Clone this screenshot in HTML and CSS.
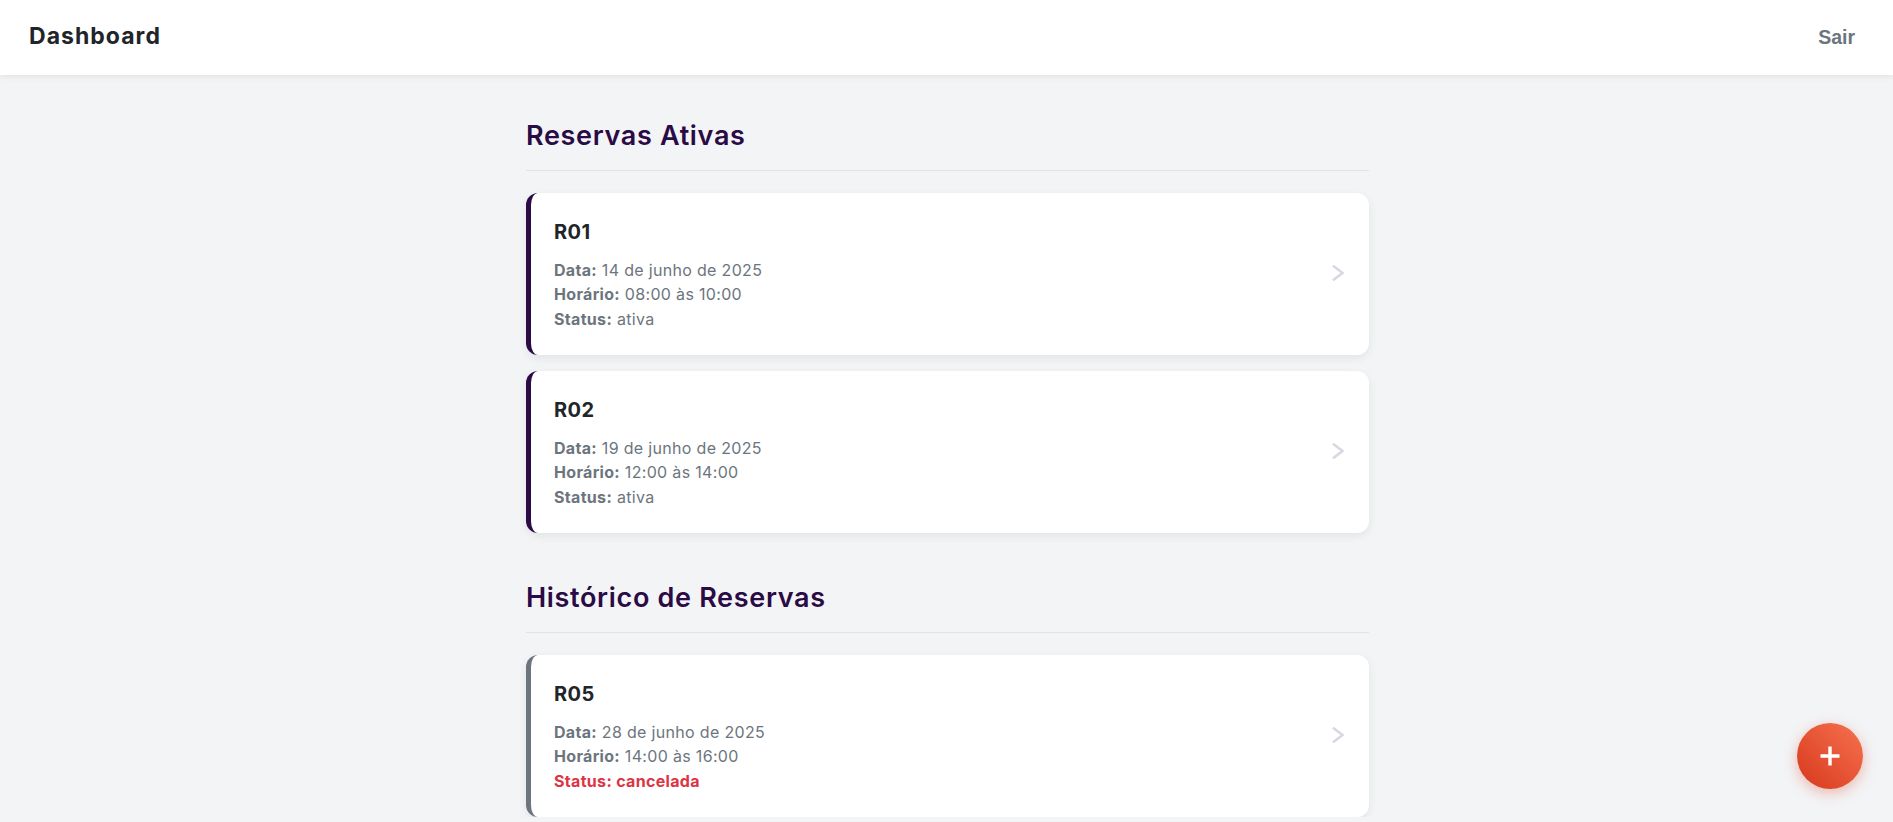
FILE: index.html
```html
<!DOCTYPE html>
<html lang="pt-BR">
<head>
<meta charset="utf-8">
<title>Dashboard</title>
<link rel="stylesheet" href="styles.css">
</head>
<body>
<header class="topbar">
  <h1 class="brand">Dashboard</h1>
  <button class="logout">Sair</button>
</header>
<main class="container">
  <section class="section">
    <h2 class="section-title">Reservas Ativas</h2>
    <div class="card-list">
      <div class="card card-active">
        <div class="card-body">
          <h3 class="card-title">R01</h3>
          <p class="card-line"><strong>Data:</strong> 14 de junho de 2025</p>
          <p class="card-line"><strong>Horário:</strong> 08:00 às 10:00</p>
          <p class="card-line"><strong>Status:</strong> ativa</p>
        </div>
        <svg class="chevron" viewBox="0 0 13 16" width="13" height="16"><polyline points="2,1.5 10.5,8 2,14.5" fill="none" stroke="#d6dae0" stroke-width="2.6" stroke-linecap="square"/></svg>
      </div>
      <div class="card card-active">
        <div class="card-body">
          <h3 class="card-title">R02</h3>
          <p class="card-line"><strong>Data:</strong> 19 de junho de 2025</p>
          <p class="card-line"><strong>Horário:</strong> 12:00 às 14:00</p>
          <p class="card-line"><strong>Status:</strong> ativa</p>
        </div>
        <svg class="chevron" viewBox="0 0 13 16" width="13" height="16"><polyline points="2,1.5 10.5,8 2,14.5" fill="none" stroke="#d6dae0" stroke-width="2.6" stroke-linecap="square"/></svg>
      </div>
    </div>
  </section>
  <section class="section section-history">
    <h2 class="section-title">Histórico de Reservas</h2>
    <div class="card-list">
      <div class="card card-past">
        <div class="card-body">
          <h3 class="card-title">R05</h3>
          <p class="card-line"><strong>Data:</strong> 28 de junho de 2025</p>
          <p class="card-line"><strong>Horário:</strong> 14:00 às 16:00</p>
          <p class="card-line status-cancel"><strong>Status: cancelada</strong></p>
        </div>
        <svg class="chevron" viewBox="0 0 13 16" width="13" height="16"><polyline points="2,1.5 10.5,8 2,14.5" fill="none" stroke="#d6dae0" stroke-width="2.6" stroke-linecap="square"/></svg>
      </div>
    </div>
  </section>
</main>
<button class="fab" aria-label="Nova reserva">
  <svg viewBox="0 0 22 22" width="22" height="22"><path d="M11 1.5v19M1.5 11h19" stroke="#fff" stroke-width="3.4" fill="none"/></svg>
</button>
</body>
</html>
```
FILE: styles.css
```css
* { box-sizing: border-box; }
html, body { margin: 0; padding: 0; }
body {
  background: #f3f4f6;
  font-family: Inter, "Open Sans", sans-serif;
  color: #212529;
}
.topbar {
  height: 75px;
  background: #fff;
  display: flex;
  align-items: center;
  justify-content: space-between;
  padding: 0 38px 0 29px;
  box-shadow: 0 2px 6px rgba(0, 0, 0, 0.07);
  position: relative;
  z-index: 1;
}
.brand {
  margin: 0 0 3px;
  font-size: 23px;
  font-weight: 700;
  letter-spacing: 0.045em;
  color: #212529;
}
.logout {
  border: none;
  background: none;
  padding: 0;
  font-family: "Liberation Sans", Arial, sans-serif;
  font-weight: 700;
  font-size: 19.5px;
  color: #6c757d;
  cursor: pointer;
}
.container {
  width: 843px;
  margin: 0 auto;
  padding-top: 45px;
  position: relative;
  left: 1px;
}
.section-title {
  margin: 0 0 22px;
  font-size: 27px;
  font-weight: 600;
  line-height: 31px;
  letter-spacing: 0.025em;
  color: #2a0b45;
  padding-bottom: 19px;
  border-bottom: 1px solid #e1e3e7;
}
.section-history { margin-top: 49px; }
.card-list {
  display: flex;
  flex-direction: column;
  gap: 16px;
}
.card {
  background: #fff;
  border-radius: 12px;
  border-left: 5px solid #2a0b45;
  box-shadow: 0 3px 10px rgba(0, 0, 0, 0.07);
  display: flex;
  align-items: flex-start;
  justify-content: space-between;
  padding: 27px 24px 22px 23px;
  min-height: 162px;
}
.card-past { border-left-color: #6c757d; }
.card-body { padding-bottom: 1px; }
.card-title {
  margin: 0 0 13.5px;
  font-size: 20px;
  font-weight: 700;
  line-height: 24px;
  letter-spacing: 0.02em;
  color: #212529;
}
.card-line {
  margin: 0;
  font-size: 16px;
  line-height: 24.5px;
  color: #6c757d;
  letter-spacing: 0.02em;
}
.card-line strong { font-weight: 700; }
.status-cancel { color: #dc3545; }
.chevron { flex: none; display: block; align-self: center; margin-top: -8px; }
.fab {
  position: fixed;
  right: 30px;
  bottom: 33px;
  width: 66px;
  height: 66px;
  border-radius: 50%;
  border: none;
  padding: 0;
  background: linear-gradient(225deg, #f6724f 0%, #d7381c 100%);
  box-shadow: 0 4px 14px rgba(220, 70, 40, 0.35);
  display: flex;
  align-items: center;
  justify-content: center;
  cursor: pointer;
}
.fab svg { display: block; }
```
